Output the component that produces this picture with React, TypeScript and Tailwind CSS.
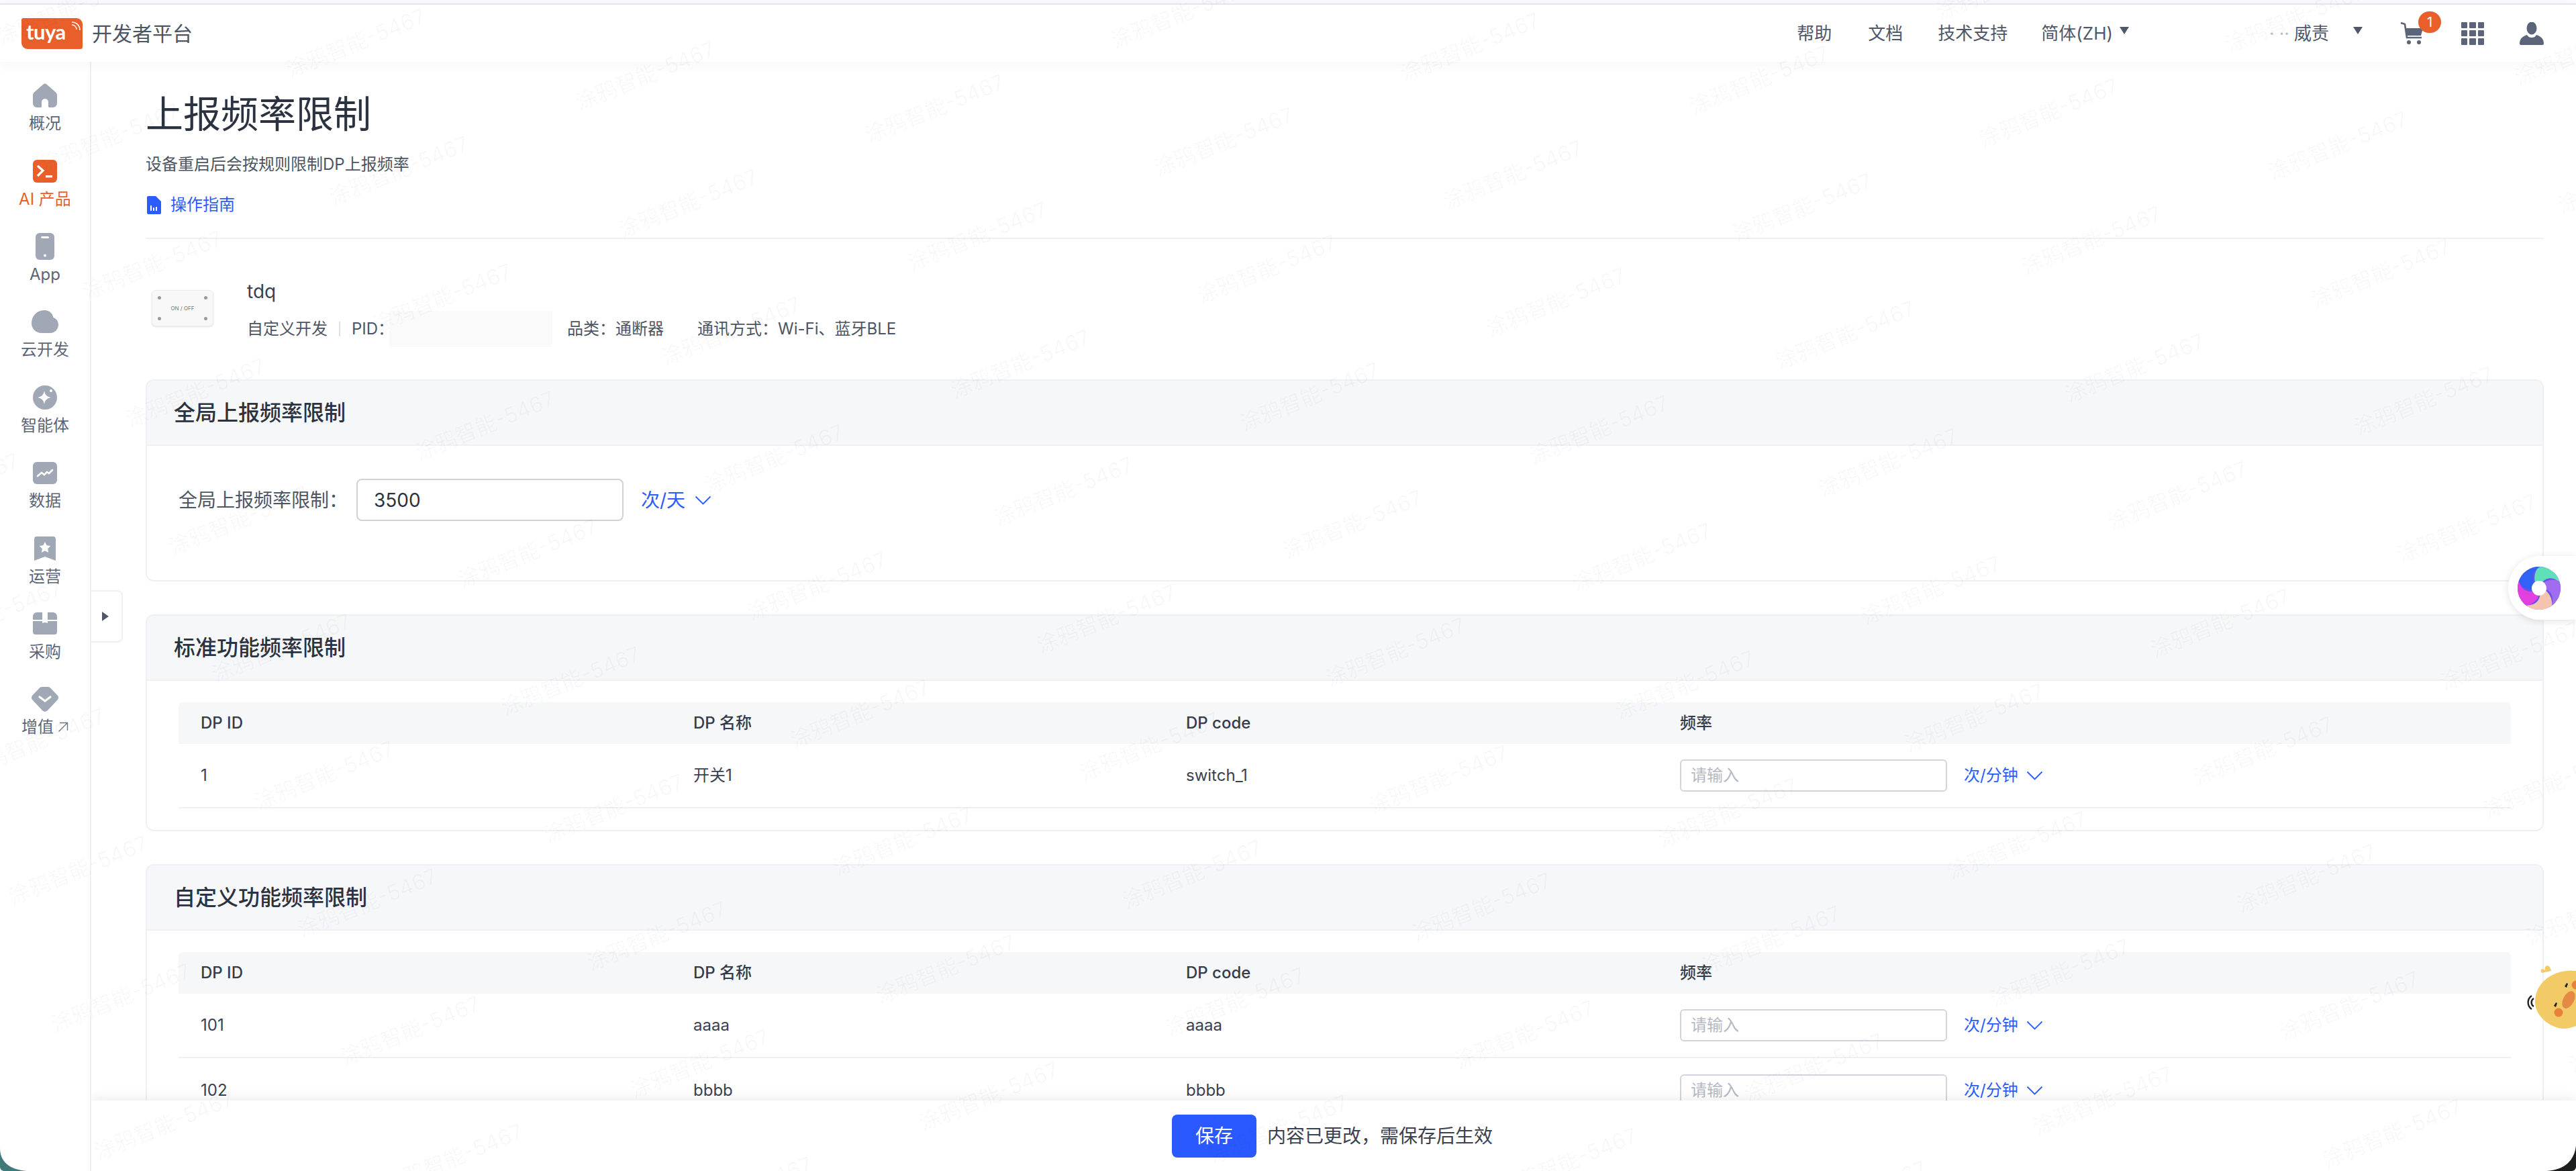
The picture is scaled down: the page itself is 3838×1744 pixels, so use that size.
import type { ReactNode } from "react";

const ICON = "#a0a7b5";

function HomeIcon() {
  return (
    <svg width="36" height="36" viewBox="0 0 36 36">
      <path
        d="M15.6 1.6a3.6 3.6 0 0 1 4.8 0l13.4 11.6c1.4 1.2 2.2 2.8 2.2 4.6V30a6 6 0 0 1-6 6h-5.4a1.6 1.6 0 0 1-1.6-1.6V28a5 5 0 0 0-10 0v6.4a1.6 1.6 0 0 1-1.6 1.6H6a6 6 0 0 1-6-6V17.8c0-1.8.8-3.4 2.2-4.6z"
        fill={ICON}
      />
    </svg>
  );
}

function TerminalIcon() {
  return (
    <svg width="36" height="34" viewBox="0 0 36 34">
      <rect width="36" height="34" rx="6" fill="#e95f2b" />
      <path d="M7 9l8 7-8 8" fill="none" stroke="#fff" strokeWidth="3.4" />
      <rect x="19" y="23" width="10" height="3.4" fill="#fff" />
    </svg>
  );
}

function PhoneIcon() {
  return (
    <svg width="28" height="40" viewBox="0 0 28 40">
      <rect width="28" height="40" rx="6" fill={ICON} />
      <rect x="8" y="5" width="12" height="3" rx="1.5" fill="#fff" />
      <circle cx="14" cy="33.5" r="2" fill="#fff" />
    </svg>
  );
}

function CloudIcon() {
  return (
    <svg width="40" height="34" viewBox="0 0 40 34">
      <path
        d="M19 0c7 0 12.500 4.500 13.500 11C37 12.500 40 16.500 40 21.500 40 28.500 34.500 34 27.500 34H15C6.500 34 0 27.500 0 19.500 0 8.500 8 0 19 0z"
        fill={ICON}
      />
    </svg>
  );
}

function AgentIcon() {
  return (
    <svg width="36" height="36" viewBox="0 0 36 36">
      <circle cx="18" cy="18" r="18" fill={ICON} />
      <path d="M17 8c1 6 4 9 10 10-6 1-9 4-10 10-1-6-4-9-10-10 6-1 9-4 10-10z" fill="#fff" />
      <circle cx="27" cy="8" r="2" fill="#fff" />
    </svg>
  );
}

function DataIcon() {
  return (
    <svg width="36" height="33" viewBox="0 0 36 33">
      <rect width="36" height="33" rx="6" fill={ICON} />
      <path d="M7 21l6-5 4 3 4-4 3 2 5-5" fill="none" stroke="#fff" strokeWidth="2.6" strokeLinecap="round" />
    </svg>
  );
}

function OpsIcon() {
  return (
    <svg width="32" height="36" viewBox="0 0 32 36">
      <path d="M4 0h24a4 4 0 0 1 4 4v32l-16-6-16 6V4a4 4 0 0 1 4-4z" fill={ICON} />
      <path d="M16 8l2.600 5.300 5.800.8-4.200 4.100 1 5.800-5.200-2.700-5.200 2.700 1-5.800-4.200-4.100 5.800-.8z" fill="#fff" />
    </svg>
  );
}

function BoxIcon() {
  return (
    <svg width="36" height="33" viewBox="0 0 36 33">
      <path d="M6 0h24a6 6 0 0 1 6 6v5H0V6a6 6 0 0 1 6-6z" fill={ICON} />
      <path d="M0 13h36v16a4 4 0 0 1-4 4H4a4 4 0 0 1-4-4z" fill={ICON} />
      <path d="M14 0h8v16l-4-1-4 1z" fill="#fff" />
    </svg>
  );
}

function GemIcon() {
  return (
    <svg width="40" height="37" viewBox="0 0 40 37">
      <path
        d="M12 1.500C13 .5 14.500 0 16 0h8c1.500 0 3 .5 4 1.500l10.500 11c2 2 2 5 0 7L24 35c-2.200 2.400-5.800 2.400-8 0L1.500 19.500c-2-2-2-5 0-7z"
        fill={ICON}
      />
      <path d="M12 15l8 6 8-6" fill="none" stroke="#fff" strokeWidth="3.200" strokeLinecap="round" />
    </svg>
  );
}

function CartIcon() {
  return (
    <svg width="36" height="34" viewBox="0 0 36 34">
      <path d="M1 1l6 2 3 20h22" fill="none" stroke="#5b6478" strokeWidth="2.600" />
      <path d="M8 9h26l-3 11H10z" fill="#5b6478" />
      <circle cx="13" cy="30" r="3" fill="#5b6478" />
      <circle cx="28" cy="30" r="3" fill="#5b6478" />
    </svg>
  );
}

function AppsIcon() {
  return (
    <div className="grid grid-cols-3 gap-[3px] w-[34px] h-[34px]">
      {Array.from({ length: 9 }).map((_, i) => (
        <span key={i} className="bg-[#5b6478] rounded-[1px]" />
      ))}
    </div>
  );
}

function UserIcon() {
  return (
    <svg width="36" height="34" viewBox="0 0 36 34">
      <ellipse cx="18" cy="9" rx="7.500" ry="9.500" fill="#5b6478" />
      <path d="M0 32c0-8 5-11 11-13 2 3 4 4 7 4s5-1 7-4c6 2 11 5 11 13 0 1-1 2-2 2H2c-1 0-2-1-2-2z" fill="#5b6478" />
    </svg>
  );
}

function Caret({ className }: { className: string }) {
  return (
    <span
      className={`w-0 h-0 border-l-[7px] border-r-[7px] border-t-[11px] border-l-transparent border-r-transparent border-t-[#4f5869] ${className}`}
    />
  );
}

const NAV: { label: ReactNode; icon: ReactNode; active?: boolean }[] = [
  { label: "概况", icon: <HomeIcon /> },
  { label: "AI 产品", icon: <TerminalIcon />, active: true },
  { label: "App", icon: <PhoneIcon /> },
  { label: "云开发", icon: <CloudIcon /> },
  { label: "智能体", icon: <AgentIcon /> },
  { label: "数据", icon: <DataIcon /> },
  { label: "运营", icon: <OpsIcon /> },
  { label: "采购", icon: <BoxIcon /> },
  {
    label: (
      <span className="flex items-center gap-[6px]">
        增值
        <svg width="16" height="16" viewBox="0 0 16 16" fill="none" stroke="#6b7485" strokeWidth="1.400">
          <path d="M3 1.500h11.500V13M14.500 1.500L1.500 14.500" />
        </svg>
      </span>
    ),
    icon: <GemIcon />,
  },
];

function SideNav() {
  return (
    <aside className="w-[136px] shrink-0 border-r-2 border-[#eef0f6] pt-[13px] bg-white">
      {NAV.map((item, i) => (
        <div key={i} className="h-[112.400px] flex flex-col items-center justify-center gap-[6px]">
          <div className="h-[40px] flex items-center justify-center">{item.icon}</div>
          <div
            className={`text-[24px] leading-[32px] ${item.active ? "text-[#e95f2b]" : "text-[#5c6576]"}`}
          >
            {item.label}
          </div>
        </div>
      ))}
    </aside>
  );
}

function TopBar() {
  return (
    <header className="relative z-20 h-[85px] shrink-0 bg-white shadow-[0_6px_18px_rgba(0,0,0,0.035)] flex items-center pl-[32px] pr-[48px]">
      <div className="w-[91px] h-[46px] bg-[#e95f2b] rounded-tl-[3px] rounded-tr-[9px] rounded-bl-[9px] rounded-br-[3px] relative flex items-center pl-[7px]">
        <span className="font-['Lato',sans-serif] font-bold text-[31px] leading-none text-white tracking-[-0.5px] pb-[4px]">
          tuya
        </span>
        <svg className="absolute right-[3px] top-[5px]" width="14" height="14" viewBox="0 0 14 14" fill="none" stroke="#fff" strokeWidth="1.500">
          <path d="M1 5c4 0 7 3 7 7M1 1c7 0 12 5 12 12" />
        </svg>
      </div>
      <span className="ml-[14px] text-[30px] leading-none text-[#4d5562]">开发者平台</span>
      <nav className="ml-auto flex items-center text-[26px] text-[#4f5869]">
        <span>帮助</span>
        <span className="ml-[54px]">文档</span>
        <span className="ml-[52px]">技术支持</span>
        <span className="ml-[50px]">简体(ZH)</span>
        <Caret className="ml-[10px] mb-[8px]" />
        <span className="ml-[128px] w-[170px] text-right text-[26px] text-[#4f5869]">
          <span className="opacity-40">· ·· </span>威责
        </span>
        <Caret className="ml-[36px] mb-[8px]" />
        <div className="ml-[56px] relative">
          <CartIcon />
          <span className="absolute -top-[16px] left-[27px] w-[34px] h-[32px] rounded-full bg-[#e95f2b] text-white text-[20px] leading-[32px] text-center">
            1
          </span>
        </div>
        <div className="ml-[55px]">
          <AppsIcon />
        </div>
        <div className="ml-[53px]">
          <UserIcon />
        </div>
      </nav>
    </header>
  );
}

function Unit({ label, large }: { label: string; large?: boolean }) {
  return (
    <span
      className={`flex items-center text-[#2a5cff] ${large ? "ml-[26px] text-[28px] gap-[14px]" : "ml-[25px] text-[24px] gap-[12px]"}`}
    >
      {label}
      <svg width="25" height="14" viewBox="0 0 25 14" fill="none" stroke="#2a5cff" strokeWidth="1.800">
        <path d="M1.500 1.500l11 11 11-11" />
      </svg>
    </span>
  );
}

function SectionCard({ title, children, className }: { title: string; children: ReactNode; className: string }) {
  return (
    <section className={`border-2 border-[#eff0f5] rounded-[12px] overflow-hidden ${className}`}>
      <div className="h-[97px] bg-[#f6f7f9] border-b-2 border-[#eff0f5] flex items-center pl-[40px] text-[32px] font-medium text-[#2b3240]">
        {title}
      </div>
      {children}
    </section>
  );
}

const COL = "grid grid-cols-[734px_734px_736px_1fr] px-[33px] items-center";

function RateRow({ id, name, code, rule }: { id: string; name: string; code: string; rule?: boolean }) {
  return (
    <div className={`${COL} h-[96px] text-[24px] text-[#3a4150] ${rule ? "border-b-2 border-[#eff0f5]" : ""}`}>
      <span>{id}</span>
      <span>{name}</span>
      <span>{code}</span>
      <div className="flex items-center">
        <div className="w-[398px] h-[48px] border-2 border-[#d3d5de] rounded-[6px] flex items-center pl-[14px] text-[#b4b9c4]">
          请输入
        </div>
        <Unit label="次/分钟" />
      </div>
    </div>
  );
}

function RateTable({ children }: { children: ReactNode }) {
  return (
    <div className="mt-[32px] mx-[47px]">
      <div className={`${COL} h-[62px] bg-[#f6f7f9] rounded-t-[6px] text-[24px] font-medium text-[#343b49]`}>
        <span>DP ID</span>
        <span>DP 名称</span>
        <span>DP code</span>
        <span>频率</span>
      </div>
      {children}
    </div>
  );
}

function Watermarks() {
  const marks: { x: number; y: number }[] = [];
  for (let i = -10; i < 12; i++) {
    for (let j = -4; j < 14; j++) {
      const x = 420 + i * 431 + j * 64;
      const y = 40 + i * 49 + j * 190;
      if (x > -200 && x < 3900 && y > -50 && y < 1780) marks.push({ x, y });
    }
  }
  return (
    <div className="absolute inset-0 z-40 overflow-hidden pointer-events-none">
      {marks.map((m, i) => (
        <span
          key={i}
          className="absolute whitespace-nowrap text-[32px] text-black/[0.03] -rotate-[22deg]"
          style={{ left: m.x, top: m.y }}
        >
          涂鸦智能-5467
        </span>
      ))}
    </div>
  );
}

const BLADE = "M32 0A32 32 0 0 1 63 24C54 14 42 16 36 24L26 24C24 14 26 6 32 0Z";

function AssistantBubble() {
  const blades = [
    { color: "#5fe0b8", angle: 0 },
    { color: "#a06cf0", angle: 72 },
    { color: "#f5c4b0", angle: 144 },
    { color: "#e23fe0", angle: 216 },
    { color: "#2f62f5", angle: 288 },
  ];
  return (
    <div className="absolute z-30 right-0 top-[828px] w-[101px] h-[95px] bg-white rounded-l-[48px] shadow-[0_2px_12px_rgba(0,0,0,0.12)] flex items-center pl-[14px]">
      <svg width="64" height="64" viewBox="0 0 64 64">
        <circle cx="32" cy="32" r="32" fill="#6a50f0" />
        {blades.map((b) => (
          <path key={b.angle} d={BLADE} fill={b.color} transform={`rotate(${b.angle} 32 32)`} />
        ))}
        <circle cx="32" cy="32" r="11" fill="#fff" />
      </svg>
    </div>
  );
}

function Mascot() {
  return (
    <div className="absolute z-30 right-0 top-[1436px] w-[78px] h-[100px]">
      <svg width="78" height="100" viewBox="0 0 78 100">
        <path d="M12 47a12 12 0 0 0 0 20M15 51a7 7 0 0 0 0 12" fill="none" stroke="#222" strokeWidth="2.400" />
        <path d="M27 13c-2-2-2-5 1-6l4 2c-1-3 0-6 3-7 3 0 5 3 6 8z" fill="#f3cb66" />
        <path d="M78 10C50 6 17 24 17 56c0 22 24 40 43 40 6 0 12-2 18-4z" fill="#f3cb66" />
        <ellipse cx="67" cy="53" rx="8" ry="14" transform="rotate(28 67 53)" fill="#e58a45" />
        <circle cx="52" cy="72" r="6.500" fill="#e8823a" />
        <circle cx="78" cy="31" r="6.500" fill="#e8823a" />
        <path d="M61 33l3-5 2 1-2 6zM45 62l3-5 2 1-2 6z" fill="#222" />
      </svg>
    </div>
  );
}

export default function App() {
  return (
    <div className="relative w-[3838px] h-[1744px] overflow-hidden bg-white font-['Inter','Noto_Sans_CJK_SC',sans-serif] flex flex-col">
      <div className="h-[7px] shrink-0 bg-[#f8f8fd] border-b-2 border-[#e4e6f0]" />
      <TopBar />
      <div className="flex-1 min-h-0 flex">
        <SideNav />
        <main className="relative flex-1 min-w-0 overflow-hidden">
          <div className="pl-[81px] pr-[48px]">
            <h1 className="mt-[44px] text-[56px] leading-[68px] text-[#2b3240]">上报频率限制</h1>
            <p className="mt-[25px] text-[24px] leading-[32px] text-[#4d5562]">设备重启后会按规则限制DP上报频率</p>
            <div className="mt-[28px] flex items-center gap-[14px] text-[24px] leading-[32px] text-[#2a5cff]">
              <svg className="ml-[2px]" width="21" height="27" viewBox="0 0 21 27">
                <path d="M2 0h11l8 8v17a2 2 0 0 1-2 2H2a2 2 0 0 1-2-2V2a2 2 0 0 1 2-2z" fill="#2a5cff" />
                <path d="M6 14v8M10 17v5M14 16v6" stroke="#fff" strokeWidth="2" />
              </svg>
              操作指南
            </div>
            <div className="mt-[33px] h-[2px] bg-[#eff0f5]" />

            <div className="mt-[60px] h-[107px] flex relative">
              <div className="ml-[9px] mt-[16px] w-[92px] h-[54px] rounded-[6px] bg-[#f8f8f8] border border-[#ededed] shadow-sm relative flex items-center justify-center text-[8px] leading-none text-[#777] shrink-0">
                ON / OFF
                <span className="absolute left-[8px] top-[8px] w-[5px] h-[5px] rounded-full bg-[#999]" />
                <span className="absolute right-[8px] top-[8px] w-[5px] h-[5px] rounded-full bg-[#999]" />
                <span className="absolute left-[8px] bottom-[8px] w-[5px] h-[5px] rounded-full bg-[#999]" />
                <span className="absolute right-[8px] bottom-[8px] w-[5px] h-[5px] rounded-full bg-[#999]" />
              </div>
              <div className="ml-[50px] min-w-0">
                <div className="text-[28px] leading-[36px] text-[#3a4150]">tdq</div>
                <div className="mt-[11px] flex items-center text-[24px] leading-[32px] text-[#4d5562]">
                  <span>自定义开发</span>
                  <span className="mx-[17px] w-[2px] h-[22px] bg-[#dfe1e6]" />
                  <span>PID：</span>
                  <span className="ml-[-7px] w-[243px] h-[54px] bg-[#fafafa] shrink-0" />
                  <span className="ml-[22px]">品类：通断器</span>
                  <span className="ml-[50px]">通讯方式：Wi-Fi、蓝牙BLE</span>
                </div>
              </div>
            </div>

            <SectionCard title="全局上报频率限制" className="mt-[42px] h-[301px]">
              <div className="mt-[49px] ml-[47px] flex items-center text-[28px]">
                <span className="text-[#4d5562] w-[265px]">全局上报频率限制：</span>
                <div className="w-[398px] h-[63px] border-2 border-[#d0d2db] rounded-[8px] flex items-center pl-[24px] text-[#2b3240]">
                  3500
                </div>
                <Unit label="次/天" large />
              </div>
            </SectionCard>

            <SectionCard title="标准功能频率限制" className="mt-[49px] h-[323px]">
              <RateTable>
                <RateRow id="1" name="开关1" code="switch_1" rule />
              </RateTable>
            </SectionCard>

            <SectionCard title="自定义功能频率限制" className="mt-[49px] h-[500px]">
              <RateTable>
                <RateRow id="101" name="aaaa" code="aaaa" rule />
                <RateRow id="102" name="bbbb" code="bbbb" />
              </RateTable>
            </SectionCard>
          </div>

          {/* 底部保存条，盖在内容上 */}
          <div className="absolute left-0 right-0 bottom-0 z-20 h-[105px] bg-white shadow-[0_-6px_14px_rgba(0,0,0,0.06)] flex items-center justify-center pr-[4px]">
            <button type="button" className="w-[126px] h-[64px] rounded-[8px] bg-[#2a5aff] text-white text-[28px]">
              保存
            </button>
            <span className="ml-[16px] text-[28px] text-[#3a4150]">内容已更改，需保存后生效</span>
          </div>

          {/* 侧栏收起按钮 */}
          <div className="absolute z-10 left-0 top-[787px] w-[47px] h-[78px] bg-white border-2 border-l-0 border-[#eff0f5] rounded-r-[8px] flex items-center justify-center pr-[4px]">
            <span className="w-0 h-0 border-y-[7px] border-l-[10px] border-y-transparent border-l-[#4f5869]" />
          </div>
        </main>
      </div>

      <AssistantBubble />
      <Mascot />

      {/* 窗口圆角 */}
      <svg className="absolute z-50 left-0 bottom-0" width="44" height="44" viewBox="0 0 44 44">
        <path d="M0 10c0 20 14 32 40 34H6c-3 0-6-3-6-6z" fill="#3f7a78" />
      </svg>
      <svg className="absolute z-50 right-0 bottom-0" width="44" height="44" viewBox="0 0 44 44">
        <path d="M44 6c-2 20-14 36-44 38h38c3 0 6-3 6-6z" fill="#1a1f1e" />
      </svg>
      <Watermarks />
    </div>
  );
}
